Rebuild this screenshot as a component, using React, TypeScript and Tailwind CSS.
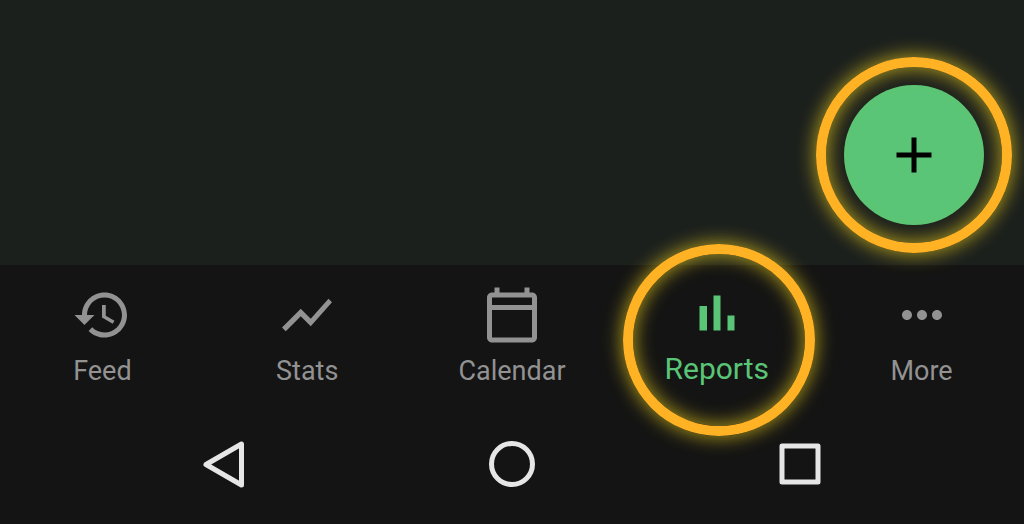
import type { ReactNode } from 'react'
import clsx from 'clsx'

type Tab = {
    label: string
    path: string
    active?: boolean
}

const tabs: Tab[] = [
    {
        label: 'Feed',
        path: 'M13 3c-4.97 0-9 4.03-9 9H1l3.89 3.89.07.14L9 12H6c0-3.87 3.13-7 7-7s7 3.13 7 7-3.13 7-7 7c-1.93 0-3.68-.79-4.94-2.06l-1.42 1.42C8.27 19.99 10.51 21 13 21c4.97 0 9-4.03 9-9s-4.03-9-9-9zm-1 5v5l4.28 2.54.72-1.21-3.5-2.08V8H12z',
    },
    {
        label: 'Stats',
        path: 'M3.5 18.49l6-6.01 4 4L22 6.92l-1.41-1.41-7.09 7.97-4-4L2 16.99z',
    },
    {
        label: 'Calendar',
        path: 'M20 3h-1V1h-2v2H7V1H5v2H4c-1.1 0-2 .9-2 2v16c0 1.1.9 2 2 2h16c1.1 0 2-.9 2-2V5c0-1.1-.9-2-2-2zm0 2v3H4V5h16zM4 21V10h16v11H4z',
    },
    {
        label: 'Reports',
        path: 'M5 9.2h3V19H5zM10.6 5h2.8v14h-2.8zm5.6 8H19v6h-2.8z',
        active: true,
    },
    {
        label: 'More',
        path: 'M6 10c-1.1 0-2 .9-2 2s.9 2 2 2 2-.9 2-2-.9-2-2-2zm12 0c-1.1 0-2 .9-2 2s.9 2 2 2 2-.9 2-2-.9-2-2-2zm-6 0c-1.1 0-2 .9-2 2s.9 2 2 2 2-.9 2-2-.9-2-2-2z',
    },
]

function Icon({ path }: { path: string }) {
    return (
        <svg viewBox="0 0 24 24" className="size-15 fill-current" aria-hidden="true">
            <path d={path} />
        </svg>
    )
}

/* Glowing circle that points out a control */
function Ring({ className }: { className: string }) {
    return (
        <span
            className={clsx(
                'pointer-events-none absolute rounded-full border-10 border-[#ffb224] shadow-[0_0_18px_2px_rgba(255,225,30,0.6),inset_0_0_18px_2px_rgba(255,225,30,0.6)]',
                className
            )}
        />
    )
}

function TabLink({ label, path, active }: Tab) {
    return (
        <a
            href={`#${label.toLowerCase()}`}
            aria-current={active ? 'page' : undefined}
            className={clsx(
                'relative flex flex-col items-center',
                active ? 'pt-[18px] text-[30px] text-[#5ac576]' : 'pt-5 text-[27px] text-[#929292]'
            )}
        >
            <Icon path={path} />
            <span className="leading-[52px]">{label}</span>
            {active && <Ring className="left-1/2 -top-[21px] ml-0.5 size-48 -translate-x-1/2" />}
        </a>
    )
}

function SystemButton({ label, children }: { label: string; children: ReactNode }) {
    return (
        <button type="button" aria-label={label} className="flex justify-center">
            <svg
                viewBox="0 0 48 48"
                className="size-12 fill-none stroke-[#e6e6e6] stroke-5"
                strokeLinejoin="round"
                aria-hidden="true"
            >
                {children}
            </svg>
        </button>
    )
}

export default function App() {
    return (
        <div className="flex min-h-screen flex-col bg-[#141414] font-['Roboto',sans-serif]">
            <main className="flex flex-1 items-end justify-end bg-[#1c201d] pr-10 pb-10">
                <button
                    type="button"
                    aria-label="Add"
                    className="relative flex size-35 items-center justify-center rounded-full bg-[#5ac576] text-black"
                >
                    <Icon path="M19 13h-6v6h-2v-6H5v-2h6V5h2v6h6v2z" />
                    <Ring className="-inset-7" />
                </button>
            </main>

            {/* App tabs */}
            <nav className="relative grid grid-cols-5">
                {tabs.map((tab) => (
                    <TabLink key={tab.label} {...tab} />
                ))}
            </nav>

            {/* System keys */}
            <div className="grid grid-cols-3 px-20 pt-[43px] pb-9">
                <SystemButton label="Back">
                    <path d="M6 24.500L41.500 4v41z" />
                </SystemButton>
                <SystemButton label="Home">
                    <circle cx="24" cy="24" r="20.500" />
                </SystemButton>
                <SystemButton label="Overview">
                    <rect x="6" y="6" width="36" height="36" />
                </SystemButton>
            </div>
        </div>
    )
}
